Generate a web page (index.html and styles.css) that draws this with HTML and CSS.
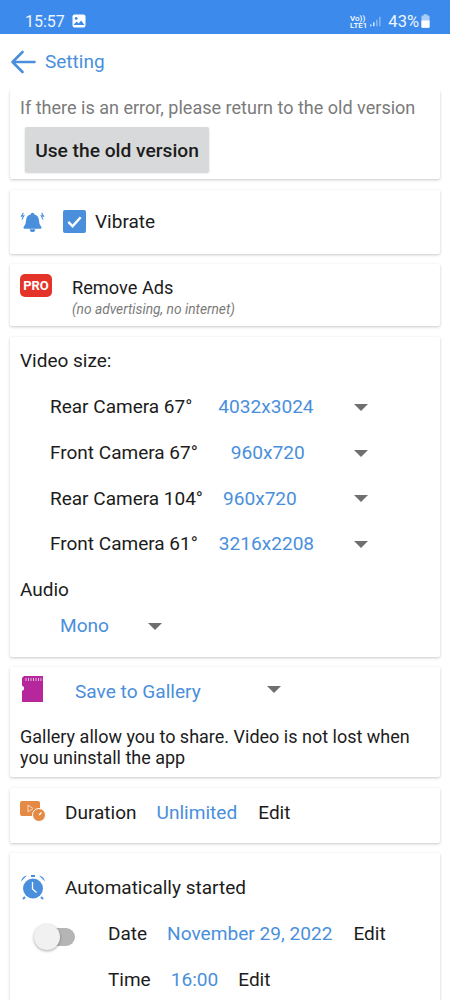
FILE: index.html
```html
<!DOCTYPE html>
<html lang="en">
<head>
<meta charset="utf-8">
<title>Setting</title>
<link rel="stylesheet" href="styles.css">
</head>
<body>
<div class="screen">
  <div class="statusbar">
    <span class="clock">15:57</span>
    <svg class="gallery" viewBox="0 0 14 14"><rect width="13" height="13" x=".5" y=".5" rx="2" fill="#fff"/><circle cx="4.200" cy="4.400" r="1.400" fill="#3c8aec"/><path d="M1.500 11l3.200-3.400 2 1.800 2.400-3 3.400 4.600z" fill="#3c8aec"/></svg>
    <span class="spacer"></span>
    <span class="volte"><span>Vo))</span><span>LTE1</span></span>
    <svg class="signal" viewBox="0 0 14 13"><path d="M1 10v2M4.500 7.500V12" stroke="#fff" stroke-width="1.400"/><path d="M8 4.500V12M11.500 1V12" stroke="#a9cdf7" stroke-width="1.200"/></svg>
    <span class="percent">43%</span>
    <svg class="battery" viewBox="0 0 10 15"><path d="M3 0h4v1.500h1.500q1 0 1 1V14q0 1-1 1h-7q-1 0-1-1V2.500q0-1 1-1H3z" fill="#a9cdf7"/><path d="M.5 7h9v7q0 1-1 1h-7q-1 0-1-1z" fill="#fff"/></svg>
  </div>
  <header class="topbar">
    <svg class="back" viewBox="0 0 26 24"><path d="M24.500 12H2.500M12.500 2l-10 10 10 10" fill="none" stroke="#4a8fdc" stroke-width="2.600" stroke-linecap="round" stroke-linejoin="round"/></svg>
    <span class="title">Setting</span>
  </header>
  <main class="content">
    <section class="card card-old">
      <p class="note">If there is an error, please return to the old version</p>
      <button class="old-btn">Use the old version</button>
    </section>
    <section class="card card-vibrate">
      <svg class="bell" viewBox="0 0 26 22"><path d="M13 1.500q1.800 0 2 1.800 4.500 1.300 4.700 6.200.2 4.800 2.500 6.800.8 1.200-.6 1.700H4.400q-1.400-.5-.6-1.700 2.300-2 2.500-6.800.2-4.900 4.700-6.200.2-1.800 2-1.800zM10 18.500h6q-.5 3-3 3t-3-3z" fill="#4a8fdc"/><path d="M3.500 1.500L1.500 5l2.500-.5L2 8.500M22.500 1.500L24.500 5 22 4.500l2 4" fill="none" stroke="#4a8fdc" stroke-width="1.100"/></svg>
      <span class="checkbox"><svg viewBox="0 0 22 22"><path d="M4.500 11.500l4.500 4.500 8.500-9.500" fill="none" stroke="#fff" stroke-width="2.600"/></svg></span>
      <span class="label vib-label">Vibrate</span>
    </section>
    <section class="card card-pro">
      <span class="pro">PRO</span>
      <div class="pro-text">
        <div class="label-sm">Remove Ads</div>
        <div class="hint">(no advertising, no internet)</div>
      </div>
    </section>
    <section class="card card-video">
      <div class="label">Video size:</div>
      <div class="vrow"><span class="label">Rear Camera 67°</span><span class="value v1">4032x3024</span><span class="caret"></span></div>
      <div class="vrow"><span class="label">Front Camera 67°</span><span class="value v2">960x720</span><span class="caret"></span></div>
      <div class="vrow"><span class="label">Rear Camera 104°</span><span class="value v3">960x720</span><span class="caret"></span></div>
      <div class="vrow"><span class="label">Front Camera 61°</span><span class="value v4">3216x2208</span><span class="caret"></span></div>
      <div class="label audio">Audio</div>
      <div class="audio-row"><span class="value">Mono</span><span class="caret"></span></div>
    </section>
    <section class="card card-save">
      <div class="save-row">
        <svg class="sd" viewBox="0 0 21 26"><path d="M2 0H21v26H0V15l2-1.500V11L0 9.500V2z" fill="#b5279b"/><path d="M4 2v3M6.500 2v3M9 2v3M11.500 2v3M14 2v3M16.500 2v3M19 2v3" stroke="#e9b8de" stroke-width="1"/></svg>
        <span class="value save-val">Save to Gallery</span>
        <span class="caret"></span>
      </div>
      <p class="desc">Gallery allow you to share. Video is not lost when you uninstall the app</p>
    </section>
    <section class="card card-duration">
      <svg class="dur" viewBox="0 0 26 21"><rect x="0" y="0" width="20" height="15" rx="2" fill="#e58a45"/><path d="M8 4l5 3.500-5 3.500z" fill="none" stroke="#f7d9bf" stroke-width="1"/><circle cx="19" cy="14" r="6.500" fill="#e58a45" stroke="#fff" stroke-width="1"/><path d="M19 14l2.500-2.500" stroke="#fff" stroke-width="1.200"/></svg>
      <span class="label">Duration</span>
      <span class="value dur-val">Unlimited</span>
      <span class="label dur-edit">Edit</span>
    </section>
    <section class="card card-auto">
      <div class="auto-head">
        <svg class="alarm" viewBox="0 0 26 26"><circle cx="13" cy="14.500" r="10" fill="#4a8fdc"/><path d="M1 7.500Q2 2.500 7 1.500zM25 7.500Q24 2.500 19 1.500zM11 1h4v2h-4z" fill="#4a8fdc"/><path d="M5 23l-2 2M21 23l2 2" stroke="#4a8fdc" stroke-width="2"/><path d="M12.500 8v7l4 3.500" fill="none" stroke="#fff" stroke-width="1.300"/></svg>
        <span class="label">Automatically started</span>
      </div>
      <div class="auto-body">
        <span class="switch"><span class="thumb"></span></span>
        <div class="when">
          <div class="when-row"><span class="label">Date</span><span class="value date-val">November 29, 2022</span><span class="label date-edit">Edit</span></div>
          <div class="when-row"><span class="label">Time</span><span class="value time-val">16:00</span><span class="label time-edit">Edit</span></div>
        </div>
      </div>
    </section>
  </main>
</div>
</body>
</html>
```

FILE: styles.css
```css
* { box-sizing: border-box; }
html, body { margin: 0; padding: 0; }
body { width: 450px; height: 1000px; overflow: hidden; background: #fff; font-family: Roboto, "Liberation Sans", sans-serif; color: #1c1c1c; font-size: 19px; }
p { margin: 0; }
.screen { height: 1000px; overflow: hidden; display: flex; flex-direction: column; }

.statusbar { height: 34px; flex: none; background: #3c8aec; display: flex; align-items: center; padding: 8px 20px 0 25px; color: #fff; }
.clock { font-size: 16px; color: #eef5fe; }
.gallery { width: 14px; height: 14px; margin-left: 7px; }
.spacer { flex: 1; }
.volte { display: flex; flex-direction: column; font-size: 8px; line-height: 7px; font-weight: 500; align-items: flex-start; margin-top: 1px; }
.signal { width: 12px; height: 13px; margin-left: 3px; }
.percent { font-size: 16.500px; margin-left: 6px; color: #eef5fe; }
.battery { width: 9px; height: 14px; margin-left: 2px; }

.topbar { height: 56px; flex: none; display: flex; align-items: center; padding-left: 10px; }
.back { width: 26px; height: 24px; margin-top: -1px; }
.title { font-size: 19px; line-height: 24px; color: #4a8fdc; margin: 0 0 0 9px; }

.content { flex: 1; padding: 0 10px; display: flex; flex-direction: column; gap: 10.500px; overflow: hidden; }
.card { background: #fff; border-radius: 2px; box-shadow: 0 1px 3px rgba(0,0,0,.22); flex: none; }

.card-old { height: 89px; padding: 6px 10px 0; }
.note { color: #7b7b7b; font-size: 18.050px; line-height: 24px; white-space: nowrap; }
.old-btn { display: block; margin: 7px 0 0 5px; width: 184px; height: 45px; border: 0; border-radius: 2px; background: #d8d9da; color: #1c1c1c; font: 500 19.200px Roboto, sans-serif; box-shadow: 0 1px 2px rgba(0,0,0,.2); padding: 1px 0 0; }

.card-vibrate { height: 64px; display: flex; align-items: center; padding-left: 10px; }
.bell { width: 25px; height: 22px; }
.checkbox { width: 23px; height: 23px; background: #4a8fdc; border-radius: 2px; margin-left: 18px; display: flex; align-items: center; justify-content: center; }
.checkbox svg { width: 21px; height: 21px; }
.vib-label { margin-left: 9px; }

.label { font-size: 19px; line-height: 24px; white-space: nowrap; color: #1c1c1c; }
.value { font-size: 19.100px; line-height: 24px; white-space: nowrap; color: #4a8fdc; }

.card-pro { height: 62px; display: flex; align-items: flex-start; padding: 10px 0 0 10px; }
.pro { width: 32px; height: 23px; background: #e4342a; border-radius: 5px; color: #fff; font-size: 13px; font-weight: 700; line-height: 23px; text-align: center; }
.pro-text { margin-left: 20px; }
.label-sm { font-size: 18.200px; line-height: 24px; margin-top: 1.500px; }
.hint { font-size: 13.750px; font-style: italic; color: #7b7b7b; line-height: 18px; }

.card-video { height: 320px; padding: 12px 10px 0; }
.vrow { display: flex; align-items: center; height: 45.700px; padding-left: 30px; }
.card-video > .label:first-child { margin-bottom: 12px; }
.caret { width: 0; height: 0; border-left: 7px solid transparent; border-right: 7px solid transparent; border-top: 7px solid #6f6f6f; }
.vrow .caret { margin-left: auto; margin-right: 62px; }
.v1 { margin-left: 26px; }
.v2 { margin-left: 33px; }
.v3 { margin-left: 20px; }
.v4 { margin-left: 21px; }
.audio { margin-top: 11px; }
.audio-row { display: flex; align-items: center; padding-left: 40px; margin-top: 12px; }
.audio-row .caret { margin-left: 39px; }

.card-save { height: 110px; padding: 9px 10px 0; }
.save-row { display: flex; align-items: center; height: 26px; }
.sd { width: 21px; height: 26px; margin-left: 2px; flex: none; }
.save-val { margin-left: 32px; margin-top: 5px; }
.save-row .caret { margin-left: 66px; }
.desc { font-size: 18px; line-height: 21px; margin-top: 23.500px; color: #1c1c1c; }

.card-duration { height: 55px; display: flex; align-items: center; padding: 0 0 5px 10px; }
.dur { width: 26px; height: 21px; margin-top: -3px; }
.card-duration .label:first-of-type { margin-left: 19px; }
.dur-val { margin-left: 20px; }
.dur-edit { margin-left: 21px; }

.card-auto { height: 200px; padding: 21px 10px 0; }
.auto-head { display: flex; align-items: center; height: 26px; }
.alarm { width: 26px; height: 26px; }
.auto-head .label { margin: 2px 0 0 19px; }
.auto-body { display: flex; margin-top: 22px; padding-left: 15px; }
.switch { width: 40px; height: 18px; background: #b5b5b5; border-radius: 9px; position: relative; margin-top: 6px; display: block; flex: none; }
.thumb { position: absolute; left: -1px; top: -4px; width: 26px; height: 26px; border-radius: 50%; background: #f1f1f1; box-shadow: 0 1px 3px rgba(0,0,0,.35); }
.when { margin-left: 33px; display: flex; flex-direction: column; gap: 22px; }
.when-row { display: flex; }
.date-val { margin-left: 20px; }
.date-edit { margin-left: 21px; }
.time-val { margin-left: 20px; }
.time-edit { margin-left: 20px; }
```
